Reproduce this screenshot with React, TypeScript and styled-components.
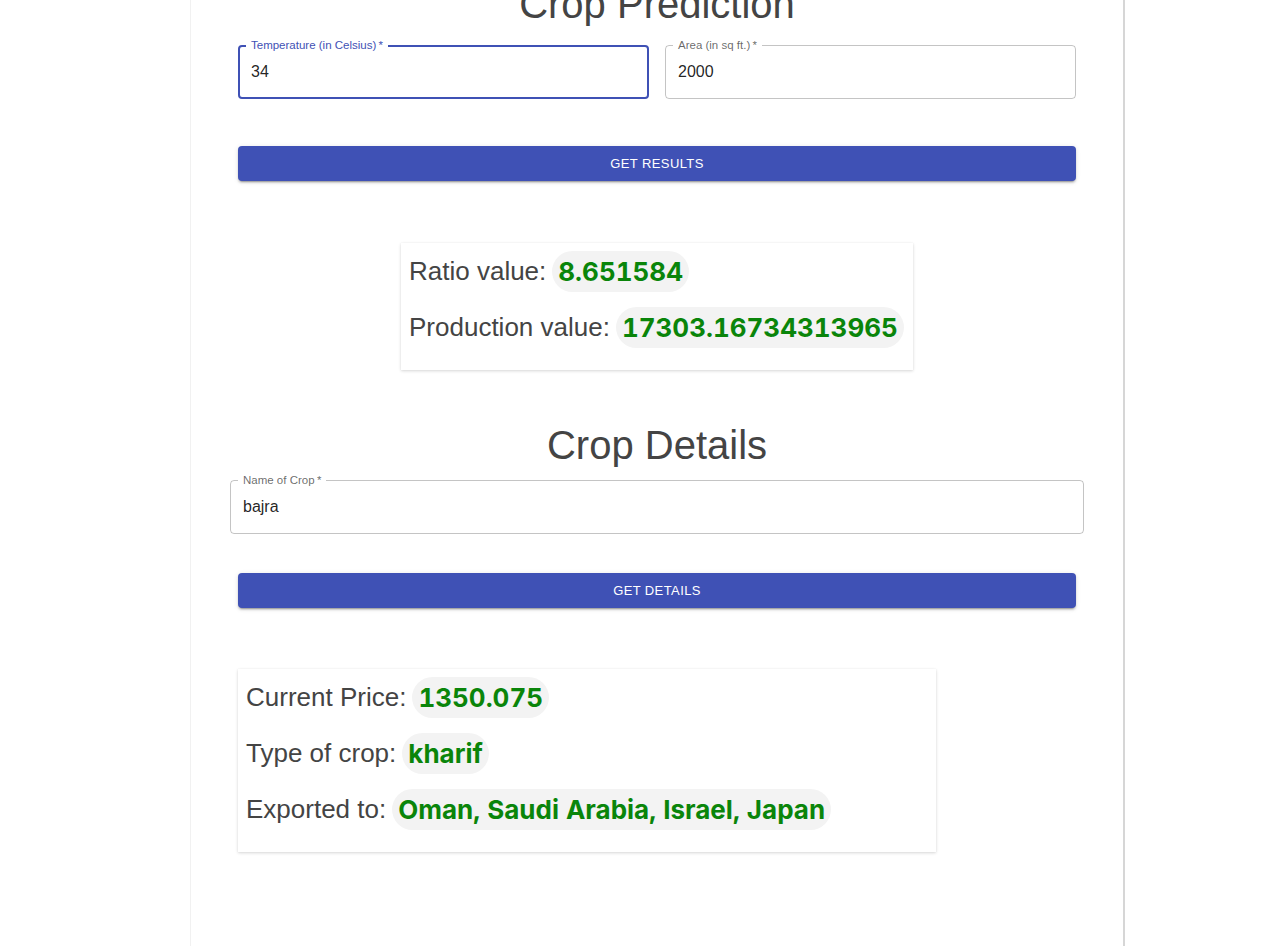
import React from "react";
import styled, { createGlobalStyle } from "styled-components";

const GlobalStyle = createGlobalStyle`
  html, body {
    margin: 0;
    padding: 0;
    background: #ffffff;
    font-family: "Liberation Sans", Arial, sans-serif;
  }
  * { box-sizing: border-box; }
`;

const Page = styled.div`
  padding-left: 190px;
  min-height: 100vh;
`;

const Container = styled.main`
  display: flow-root;
  width: 935px;
  min-height: 100vh;
  padding: 0 47px;
  border-left: 1px solid #f1f1f1;
  border-right: 2px solid #d6d6d6;
`;

const Title = styled.h1<{ $mt: number; $mb: number }>`
  margin: ${(p) => p.$mt}px 0 ${(p) => p.$mb}px;
  font-size: 40px;
  line-height: 46px;
  font-weight: 400;
  color: #444444;
  text-align: center;
`;

const FieldRow = styled.div`
  display: grid;
  grid-template-columns: 1fr 1fr;
  gap: 16px;
`;

const Field = styled.div<{ $focused?: boolean; $wide?: boolean }>`
  position: relative;
  height: 54px;
  display: flex;
  align-items: center;
  border-radius: 4px;
  margin: 0 ${(p) => (p.$wide ? "-8px" : "0")};
  border: ${(p) => (p.$focused ? "2px solid #3f51b5" : "1px solid rgba(0,0,0,0.23)")};
  padding: 0 ${(p) => (p.$focused ? "11px" : "12px")};
`;

const FloatLabel = styled.span<{ $focused?: boolean }>`
  position: absolute;
  top: ${(p) => (p.$focused ? "-9px" : "-8px")};
  left: ${(p) => (p.$focused ? "6px" : "7px")};
  padding: 0 5px;
  background: #ffffff;
  font-size: 11.5px;
  line-height: 14px;
  color: ${(p) => (p.$focused ? "#3f51b5" : "rgba(0,0,0,0.6)")};
  white-space: nowrap;
`;

const Input = styled.input`
  border: none;
  outline: none;
  padding: 0;
  margin: 0;
  width: 100%;
  background: transparent;
  font-family: "Liberation Sans", Arial, sans-serif;
  font-size: 16px;
  color: rgba(0, 0, 0, 0.87);
`;

const Button = styled.button<{ $mt: number }>`
  display: block;
  width: 100%;
  height: 35px;
  margin-top: ${(p) => p.$mt}px;
  border: none;
  border-radius: 4px;
  background: #3f51b5;
  color: #ffffff;
  font-family: "Liberation Sans", Arial, sans-serif;
  font-size: 13px;
  letter-spacing: 0.4px;
  text-transform: uppercase;
  box-shadow: 0 3px 1px -2px rgba(0, 0, 0, 0.2), 0 2px 2px 0 rgba(0, 0, 0, 0.14),
    0 1px 5px 0 rgba(0, 0, 0, 0.12);
  cursor: pointer;
`;

const Card = styled.section<{ $w: number; $mt: number; $center?: boolean }>`
  width: ${(p) => p.$w}px;
  margin: ${(p) => p.$mt}px ${(p) => (p.$center ? "auto" : "0")} 0;
  padding: 8px 8px 7px;
  background: #ffffff;
  box-shadow: 0 1px 3px rgba(0, 0, 0, 0.16), 0 0 1px rgba(0, 0, 0, 0.06);
`;

const ResultRow = styled.div`
  display: flex;
  align-items: center;
  gap: 6px;
  margin-bottom: 15px;
`;

const RowLabel = styled.span`
  font-size: 26px;
  color: #444444;
  white-space: nowrap;
`;

const Chip = styled.span`
  display: inline-block;
  height: 41px;
  line-height: 42px;
  padding: 0 6px;
  border-radius: 21px;
  background: #f3f3f3;
  color: #0a850a;
  font-family: Inter, "Liberation Sans", sans-serif;
  font-weight: 700;
  font-size: 26px;
  font-variant-numeric: tabular-nums;
  white-space: nowrap;
`;

type Item = { label: string; value: string };

const Results = ({ items, w, mt, center }: { items: Item[]; w: number; mt: number; center?: boolean }) => (
  <Card $w={w} $mt={mt} $center={center}>
    {items.map((it) => (
      <ResultRow key={it.label}>
        <RowLabel>{it.label}</RowLabel>
        <Chip>{it.value}</Chip>
      </ResultRow>
    ))}
  </Card>
);

export default function App() {
  return (
    <>
      <GlobalStyle />
      <Page>
        <Container>
          <Title $mt={-19} $mb={18}>Crop Prediction</Title>
          <FieldRow>
            <Field $focused>
              <FloatLabel $focused>Temperature (in Celsius)&thinsp;*</FloatLabel>
              <Input defaultValue="34" />
            </Field>
            <Field>
              <FloatLabel>Area (in sq ft.)&thinsp;*</FloatLabel>
              <Input defaultValue="2000" />
            </Field>
          </FieldRow>
          <Button $mt={47}>Get Results</Button>
          <Results
            w={512}
            mt={62}
            center
            items={[
              { label: "Ratio value:", value: "8.651584" },
              { label: "Production value:", value: "17303.16734313965" },
            ]}
          />
          <Title $mt={52} $mb={12}>Crop Details</Title>
          <Field $wide>
            <FloatLabel>Name of Crop&thinsp;*</FloatLabel>
            <Input defaultValue="bajra" />
          </Field>
          <Button $mt={39}>Get Details</Button>
          <Results
            w={698}
            mt={61}
            items={[
              { label: "Current Price:", value: "1350.075" },
              { label: "Type of crop:", value: "kharif" },
              { label: "Exported to:", value: "Oman, Saudi Arabia, Israel, Japan" },
            ]}
          />
        </Container>
      </Page>
    </>
  );
}
